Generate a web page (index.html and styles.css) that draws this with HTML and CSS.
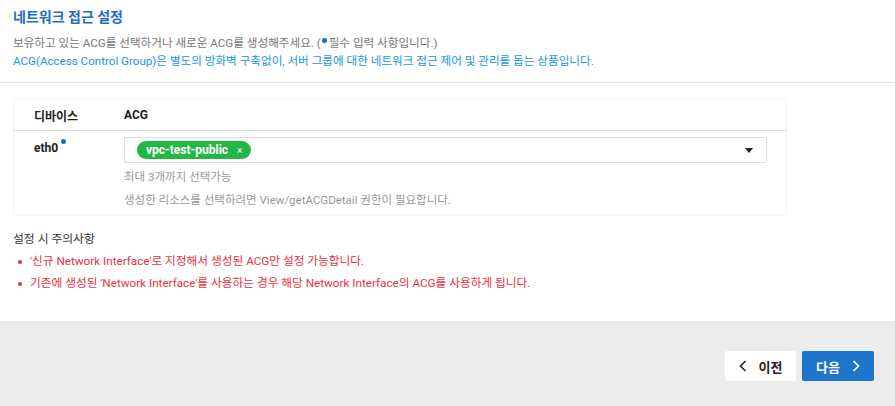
FILE: index.html
```html
<!DOCTYPE html>
<html lang="ko">
<head>
    <meta charset="UTF-8">
    <title>네트워크 접근 설정</title>
    <link rel="stylesheet" href="styles.css">
</head>
<body>
    <div class="page">
        <div class="head">
            <h2 class="title">네트워크 접근 설정</h2>
            <p class="desc">보유하고 있는 ACG를 선택하거나 새로운 ACG를 생성해주세요. (<span class="req"></span>필수 입력 사항입니다.)</p>
            <p class="desc info">ACG(Access Control Group)은 별도의 방화벽 구축없이, 서버 그룹에 대한 네트워크 접근 제어 및 관리를 돕는 상품입니다.</p>
        </div>

        <div class="content">
            <div class="card">
                <div class="row row-head">
                    <div class="col-dev">디바이스</div>
                    <div class="col-acg">ACG</div>
                </div>
                <div class="row row-body">
                    <div class="col-dev">eth0<span class="req sup"></span></div>
                    <div class="col-acg">
                        <div class="select">
                            <span class="tag">vpc-test-public <span class="tag-x">×</span></span>
                            <span class="caret"></span>
                        </div>
                        <p class="hint">최대 3개까지 선택가능</p>
                        <p class="hint">생성한 리소스를 선택하려면 View/getACGDetail 권한이 필요합니다.</p>
                    </div>
                </div>
            </div>

            <div class="notice">
                <p class="notice-title">설정 시 주의사항</p>
                <ul class="notice-list">
                    <li>'신규 Network Interface'로 지정해서 생성된 ACG만 설정 가능합니다.</li>
                    <li>기존에 생성된 'Network Interface'를 사용하는 경우 해당 Network Interface의 ACG를 사용하게 됩니다.</li>
                </ul>
            </div>
        </div>

        <div class="footer">
            <button type="button" class="btn btn-prev">
                <svg width="8" height="12" viewBox="0 0 8 12"><path d="M6.5 1L1.5 6l5 5" fill="none" stroke="#222" stroke-width="1.6"/></svg>
                이전
            </button>
            <button type="button" class="btn btn-next">
                다음
                <svg width="8" height="12" viewBox="0 0 8 12"><path d="M1.5 1l5 5-5 5" fill="none" stroke="#fff" stroke-width="1.6"/></svg>
            </button>
        </div>
    </div>
</body>
</html>
```

FILE: styles.css
```css
body {
    margin: 0;
    font-family: Roboto, "Noto Sans CJK KR", sans-serif;
    color: #333;
    background: #fff;
}
p, h2, ul {
    margin: 0;
}
.page {
    width: 895px;
    height: 406px;
    display: flex;
    flex-direction: column;
}
.head {
    padding: 7px 13px 12px;
    border-bottom: 1px solid #e2e2e2;
}
.title {
    font-size: 14px;
    line-height: 20px;
    font-weight: bold;
    color: #1b6ec2;
    margin-bottom: 7px;
}
.desc {
    font-size: 11.6px;
    line-height: 18px;
    color: #777;
}
.desc.info {
    color: #2196e3;
}
.req {
    display: inline-block;
    width: 5px;
    height: 5px;
    border-radius: 50%;
    background: #1b6ec2;
    vertical-align: 4px;
    margin: 0 2px 0 1px;
}
.req.sup {
    vertical-align: 8px;
    margin-left: 3px;
}
.content {
    flex: 1;
    padding: 16px 13px 0;
}
.card {
    width: 774px;
    border: 1px solid #f2f2f2;
    border-radius: 3px;
    box-sizing: border-box;
}
.row {
    display: flex;
}
.col-dev {
    width: 90px;
    padding-left: 20px;
    font-size: 12px;
    font-weight: bold;
    color: #222;
}
.col-acg {
    flex: 1;
    padding-right: 19px;
}
.row-head {
    height: 30px;
    align-items: center;
    border-bottom: 1px solid #ddd;
    font-size: 12px;
    font-weight: bold;
    color: #222;
}
.row-body {
    padding-top: 6px;
    padding-bottom: 3px;
}
.row-body .col-dev {
    line-height: 18px;
    padding-top: 2px;
}
.select {
    height: 26px;
    border: 1px solid #ddd;
    border-radius: 2px;
    box-sizing: border-box;
    display: flex;
    align-items: center;
    padding: 0 12px;
}
.tag {
    height: 18px;
    line-height: 18px;
    padding: 0 9px;
    border-radius: 9px;
    background: #22b845;
    color: #fff;
    font-size: 12px;
    font-weight: bold;
}
.tag-x {
    font-size: 10px;
    font-weight: normal;
    margin-left: 6px;
}
.caret {
    margin-left: auto;
    margin-right: 1px;
    width: 0;
    height: 0;
    border-left: 4px solid transparent;
    border-right: 4px solid transparent;
    border-top: 5px solid #222;
}
.hint {
    font-size: 11.5px;
    line-height: 23px;
    color: #999;
}
.hint:first-of-type {
    margin-top: 3px;
}
.notice {
    margin-top: 12px;
}
.notice-title {
    font-size: 11.8px;
    line-height: 22px;
    color: #333;
}
.notice-list {
    list-style: none;
    padding: 0;
}
.notice-list li {
    position: relative;
    padding-left: 17px;
    font-size: 11.7px;
    line-height: 22px;
    color: #ec2f3c;
}
.notice-list li::before {
    content: "";
    position: absolute;
    left: 5px;
    top: 10px;
    width: 4px;
    height: 4px;
    border-radius: 50%;
    background: #ec2f3c;
}
.footer {
    height: 85px;
    background: #ececec;
    display: flex;
    justify-content: flex-end;
    align-items: flex-start;
    gap: 6px;
    padding: 30px 21px 0 0;
    box-sizing: border-box;
}
.btn {
    height: 30px;
    border: none;
    border-radius: 2px;
    font-family: Roboto, "Noto Sans CJK KR", sans-serif;
    font-size: 13px;
    font-weight: bold;
    display: flex;
    align-items: center;
    justify-content: center;
    gap: 12px;
    cursor: pointer;
}
.btn-prev {
    width: 71px;
    background: #fff;
    color: #222;
}
.btn-next {
    width: 72px;
    background: #1e76cc;
    color: #fff;
}
```
